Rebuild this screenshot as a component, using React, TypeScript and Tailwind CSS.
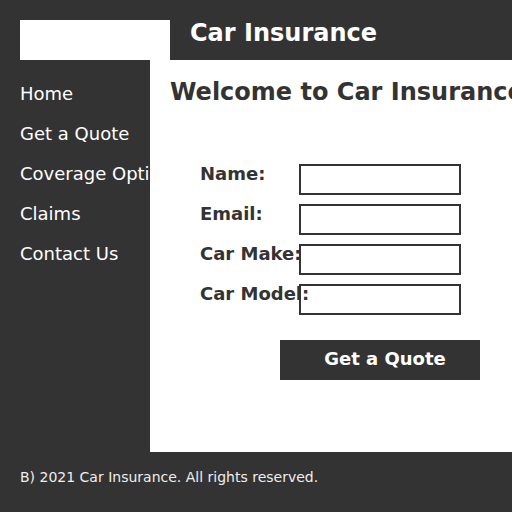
import React from "react";

const navItems = ["Home", "Get a Quote", "Coverage Options", "Claims", "Contact Us"];
const fields = ["Name:", "Email:", "Car Make:", "Car Model:"];

export default function App() {
  return (
    <div
      className="w-[512px] h-[512px] overflow-hidden bg-[#333333] flex flex-col"
      style={{ fontFamily: '"DejaVu Sans", sans-serif' }}
    >
      {/* header: logo slot + site title */}
      <header className="h-[60px] shrink-0 flex items-start pl-[20px] pt-[20px]">
        <div className="w-[150px] h-[40px] bg-white shrink-0" />
        <h1 className="ml-[20px] -mt-[1px] text-[24px] leading-[28px] font-bold text-white whitespace-nowrap">
          Car Insurance
        </h1>
      </header>

      <div className="flex h-[392px] shrink-0">
        {/* sidebar navigation */}
        <nav className="w-[150px] shrink-0 overflow-hidden pt-[13px]">
          {navItems.map((item) => (
            <div
              key={item}
              className="h-[40px] flex items-center pl-[20px] text-[18px] text-white whitespace-nowrap"
            >
              {item}
            </div>
          ))}
        </nav>

        {/* main content */}
        <main className="flex-1 bg-white overflow-hidden pl-[20px] pt-[20px] text-[#333333]">
          <h2 className="text-[24px] leading-[25px] font-bold whitespace-nowrap">
            Welcome to Car Insurance
          </h2>
          <form className="ml-[30px] mt-[59px] flex flex-col gap-[9px]">
            {fields.map((f) => (
              <div key={f} className="relative flex items-start h-[31px]">
                <input
                  type="text"
                  className="ml-[99px] w-[162px] h-[31px] border-2 border-[#333333] bg-transparent outline-none"
                />
                <label className="absolute left-0 -top-[1px] text-[18px] leading-[21px] font-bold whitespace-nowrap">
                  {f}
                </label>
              </div>
            ))}
            <button
              type="button"
              className="ml-[80px] mt-[16px] w-[200px] h-[40px] bg-[#333333] text-white text-[18px] font-bold flex items-center justify-center pl-[10px] pb-[3px]"
            >
              Get a Quote
            </button>
          </form>
        </main>
      </div>

      {/* footer */}
      <footer className="h-[60px] shrink-0 pl-[20px] pt-[17px] text-[14px] leading-[16px] text-[#eeeeee] whitespace-nowrap">
        B) 2021 Car Insurance. All rights reserved.
      </footer>
    </div>
  );
}
